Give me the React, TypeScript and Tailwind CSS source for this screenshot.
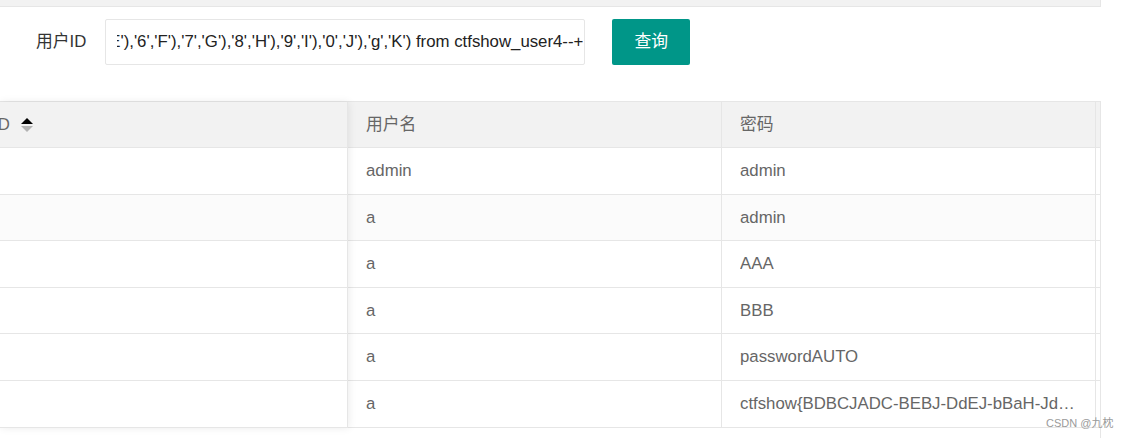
import React from 'react';

const rows = [
  { h: 'h-[47px]', bg: 'bg-white', name: 'admin', pwd: 'admin' },
  { h: 'h-[46px]', bg: 'bg-[#fbfbfb]', name: 'a', pwd: 'admin' },
  { h: 'h-[47px]', bg: 'bg-white', name: 'a', pwd: 'AAA' },
  { h: 'h-[46px]', bg: 'bg-white', name: 'a', pwd: 'BBB' },
  { h: 'h-[47px]', bg: 'bg-white', name: 'a', pwd: 'passwordAUTO' },
  { h: 'h-[47px]', bg: 'bg-white', name: 'a', pwd: 'ctfshow{BDBCJADC-BEBJ-DdEJ-bBaH-JdHJFGCEIAGB}' },
];

const query =
  "1' union select 1,replace(replace(replace(replace(replace(replace(replace(replace(replace(replace(replace(password,'1','A'),'2','B'),'3','C'),'4','D'),'5','E'),'6','F'),'7','G'),'8','H'),'9','I'),'0','J'),'g','K') from ctfshow_user4--+";

function SortIcon() {
  return (
    <svg width="12" height="14" viewBox="0 0 12 14" className="shrink-0">
      <polygon points="0,6 6,0 12,6" fill="#000" />
      <polygon points="0,8 12,8 6,14" fill="#b2b2b2" />
    </svg>
  );
}

export default function App() {
  return (
    <div
      className="relative w-[1129px] h-[438px] overflow-hidden bg-white text-[16.8px] text-[#666]"
      style={{ fontFamily: '"Liberation Sans", Arial, "Noto Sans CJK SC", sans-serif' }}
    >
      {/* top strip */}
      <div className="w-[1101px] h-[7px] bg-[#f2f2f2] border-b border-r border-[#e6e6e6]" />

      {/* form row */}
      <div className="flex items-center mt-[12px] pl-[36px] h-[46px]">
        <span className="text-[#333] leading-none whitespace-nowrap">用户ID</span>
        <div className="ml-[19px] w-[480px] h-[46px] border border-[#e6e6e6] rounded-[2px] pl-[11px] pr-[1px] flex items-center">
          <div className="flex justify-end overflow-hidden w-full">
            <span className="shrink-0 whitespace-nowrap text-[#222]">{query}</span>
          </div>
        </div>
        <button className="ml-[27px] w-[78px] h-[46px] bg-[#009688] rounded-[2px] text-white flex items-center justify-center">
          查询
        </button>
      </div>

      {/* table */}
      <div className="mt-[36px] w-[1101px] flex border-t border-r border-[#e6e6e6]">
        {/* fixed left column */}
        <div className="relative z-10 w-[348px] shrink-0 shadow-[1px_0_8px_rgba(0,0,0,0.08)]">
          <div className="h-[46px] bg-[#f2f2f2] border-b border-r border-[#e6e6e6] flex items-center">
            <span className="-ml-[7px]">ID</span>
            <span className="ml-[11px] flex">
              <SortIcon />
            </span>
          </div>
          {rows.map((r, i) => (
            <div key={i} className={`${r.h} ${r.bg} border-b border-r border-[#e6e6e6]`} />
          ))}
        </div>

        {/* main columns */}
        <div className="flex-1">
          <div className="h-[46px] flex bg-[#f2f2f2] border-b border-[#e6e6e6]">
            <div className="w-[374px] border-r border-[#e6e6e6] pl-[18px] flex items-center">用户名</div>
            <div className="w-[374px] border-r border-[#e6e6e6] pl-[18px] flex items-center">密码</div>
            <div className="flex-1" />
          </div>
          {rows.map((r, i) => (
            <div key={i} className={`${r.h} flex border-b border-[#e6e6e6]`}>
              <div className={`w-[374px] ${r.bg} border-r border-[#e6e6e6] pl-[18px] flex items-center`}>
                {r.name}
              </div>
              <div className={`w-[374px] ${r.bg} border-r border-[#e6e6e6] pl-[18px] pr-[18px] flex items-center min-w-0`}>
                <span className="truncate">{r.pwd}</span>
              </div>
              <div className="flex-1" />
            </div>
          ))}
        </div>
      </div>

      {/* continuing right edge line */}
      <div className="absolute left-[1100px] top-[427px] w-px h-[11px] bg-[#e6e6e6]" />

      {/* watermark */}
      <div className="absolute left-[1046px] top-[415px] text-[11px] text-[#9a9a9a] whitespace-nowrap">
        CSDN @九枕
      </div>
    </div>
  );
}
